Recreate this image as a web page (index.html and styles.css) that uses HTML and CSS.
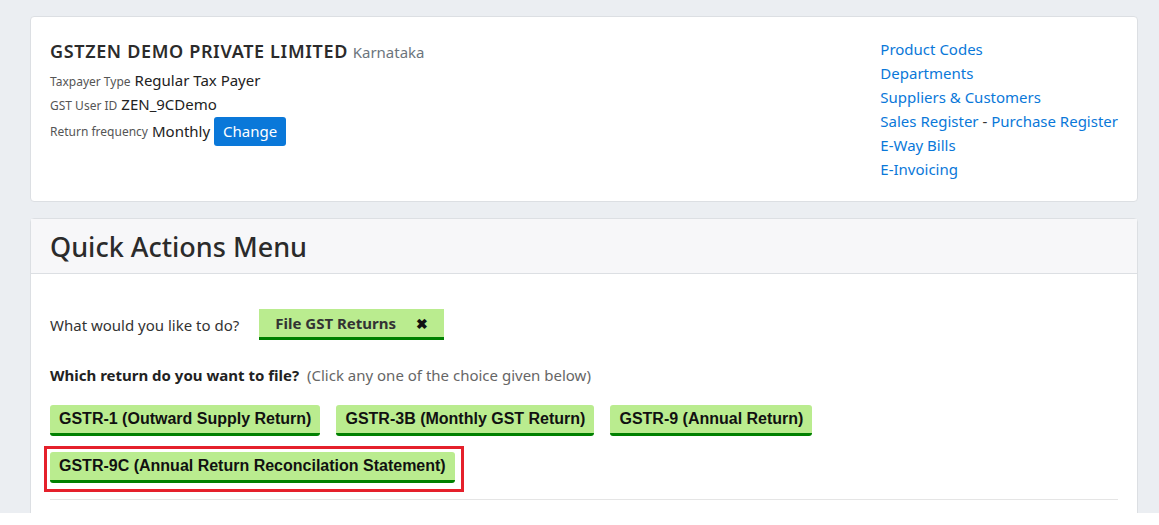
FILE: index.html
```html
<!DOCTYPE html>
<html lang="en">
<head>
  <meta charset="UTF-8" />
  <meta name="viewport" content="width=device-width, initial-scale=1.0"/>
  <title>GSTZEN - Dashboard</title>
  <link rel="stylesheet" href="styles.css">
</head>
<body>
  <div class="page">
    <div class="card profile">
      <div class="profile-info">
        <h2 class="company"><span class="company-name">GSTZEN DEMO PRIVATE LIMITED</span> <small>Karnataka</small></h2>
        <div class="info-row"><span class="info-label">Taxpayer Type</span> Regular Tax Payer</div>
        <div class="info-row"><span class="info-label">GST User ID</span> ZEN_9CDemo</div>
        <div class="info-row"><span class="info-label">Return frequency</span> Monthly <button class="btn-change">Change</button></div>
      </div>
      <ul class="links">
        <li><a href="#">Product Codes</a></li>
        <li><a href="#">Departments</a></li>
        <li><a href="#">Suppliers &amp; Customers</a></li>
        <li><a href="#">Sales Register</a> - <a href="#">Purchase Register</a></li>
        <li><a href="#">E-Way Bills</a></li>
        <li><a href="#">E-Invoicing</a></li>
      </ul>
    </div>

    <div class="card actions">
      <div class="card-header">
        <h1>Quick Actions Menu</h1>
      </div>
      <div class="card-body">
        <div class="question">
          What would you like to do?
          <span class="chip">File GST Returns <span class="chip-close">&#x2716;</span></span>
        </div>
        <div class="sub-question">
          <strong>Which return do you want to file?</strong>
          <span class="hint">(Click any one of the choice given below)</span>
        </div>
        <div class="choices">
          <button class="choice">GSTR-1 (Outward Supply Return)</button>
          <button class="choice">GSTR-3B (Monthly GST Return)</button>
          <button class="choice">GSTR-9 (Annual Return)</button>
          <div class="highlight">
            <button class="choice">GSTR-9C (Annual Return Reconcilation Statement)</button>
          </div>
        </div>
        <hr class="divider">
      </div>
    </div>
  </div>
</body>
</html>
```

FILE: styles.css
```css
* {
  box-sizing: border-box;
}
html {
  background: #ffffff;
}
body {
  margin: 0;
  font-family: 'Segoe UI', 'Noto Sans', sans-serif;
  font-size: 15px;
  color: #212529;
}
.page {
  height: 513px;
  overflow: hidden;
  background: #ebeef2;
  padding: 16px 21px 0 30px;
}
.card {
  background: #ffffff;
  border: 1px solid #dcdfe3;
  border-radius: 4px;
}
.profile {
  display: flex;
  justify-content: space-between;
  padding: 22px 19px 22px 19px;
  height: 186px;
}
.company {
  margin: 0 0 6px;
  font-size: 18px;
  font-weight: 400;
  color: #2b2b2b;
  line-height: 24px;
}
.company-name {
  font-weight: 600;
  letter-spacing: 0.65px;
}
.company small {
  font-size: 15px;
  font-weight: 400;
  letter-spacing: 0;
  color: #6c757d;
}
.info-row {
  display: flex;
  align-items: baseline;
  gap: 4px;
  height: 24px;
  font-size: 15px;
  color: #222;
}
.info-row:last-child {
  height: 26px;
  align-items: center;
}
.info-label {
  font-size: 12px;
  color: #555;
}
.btn-change {
  font-family: inherit;
  font-size: 15px;
  color: #ffffff;
  background: #0a78d9;
  border: none;
  border-radius: 3px;
  padding: 0 9px;
  height: 29px;
}
.links {
  list-style: none;
  margin: -2px 0 0;
  padding: 0;
  white-space: nowrap;
}
.links li {
  line-height: 24px;
  font-size: 15px;
  color: #333;
}
.links a {
  color: #0a78d9;
  text-decoration: none;
}
.actions {
  margin-top: 16px;
  height: 320px;
}
.card-header {
  background: #f7f7f9;
  border-bottom: 1px solid #dcdfe3;
  padding: 0 19px;
  height: 55px;
  display: flex;
  align-items: center;
}
.card-header h1 {
  margin: 0;
  font-size: 27px;
  font-weight: 500;
  color: #2b2b2b;
}
.card-body {
  padding: 35px 19px 0;
}
.question {
  display: flex;
  align-items: center;
  gap: 20px;
  color: #333;
}
.chip {
  display: inline-flex;
  align-items: center;
  gap: 20px;
  background: #baec8f;
  border-bottom: 3px solid #008000;
  padding: 5px 16px;
  font-weight: 700;
  color: #333;
  height: 31px;
}
.chip-close {
  font-size: 14px;
  color: #111;
}
.sub-question {
  margin-top: 25px;
  color: #222;
}
.sub-question strong {
  font-weight: 700;
  margin-right: 4px;
}
.hint {
  color: #666;
}
.choices {
  display: flex;
  flex-wrap: wrap;
  gap: 10px 16px;
  margin-top: 20px;
}
.choice {
  font-family: 'Liberation Sans', Arial, sans-serif;
  font-weight: 700;
  font-size: 16px;
  color: #111;
  background: #baec8f;
  border: none;
  border-bottom: 3px solid #008000;
  border-radius: 3px;
  padding: 0 9px;
  height: 31px;
}
.highlight {
  border: 3px solid #e5202b;
  padding: 3px 6px 6px 3px;
  margin-left: -6px;
}
.divider {
  border: none;
  border-top: 1px solid #e5e5e5;
  margin: 7px 0 0;
}
```
